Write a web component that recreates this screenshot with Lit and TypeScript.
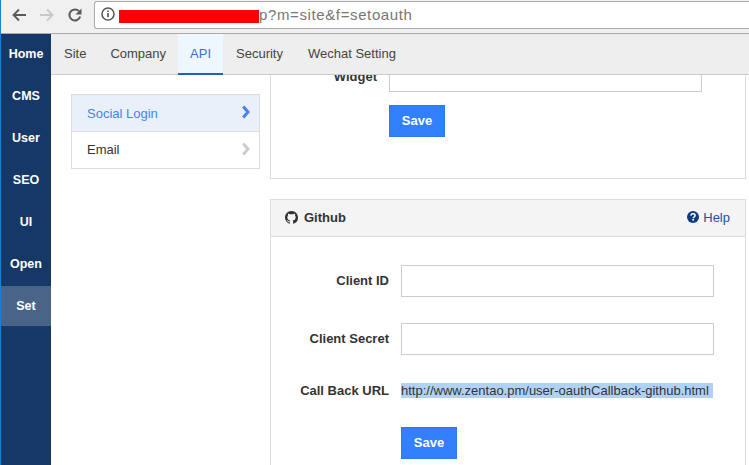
import { LitElement, html, css } from "lit";
import { customElement } from "lit/decorators.js";

const side = ["Home", "CMS", "User", "SEO", "UI", "Open", "Set"];
const tabs = ["Site", "Company", "API", "Security", "Wechat Setting"];

@customElement("app-root")
export class AppRoot extends LitElement {
  static styles = css`
    :host {
      display: flex;
      flex-direction: column;
      height: 465px;
      width: 749px;
      overflow: hidden;
      box-sizing: border-box;
      border-left: 1px solid #1a7fd8;
      font-family: "Liberation Sans", Arial, sans-serif;
      font-size: 13px;
      color: #333;
      background: #fff;
    }
    .chrome {
      flex: none;
      background: #f0f0f0;
      border-bottom: 1px solid #aaa;
      display: flex;
      padding: 1px 0 4px 0;
      box-sizing: content-box;
      height: 28px;
    }
    .navbtn {
      width: 28px;
      display: flex;
      align-items: center;
      justify-content: center;
      flex: none;
      margin-top: 2px;
      align-self: flex-start;
      height: 24px;
    }
    .navs { display: flex; padding-left: 4px; width: 93px; flex: none; box-sizing: border-box; }
    .addr {
      flex: 1;
      background: #fff;
      border: 1px solid #aaa;
      border-right: none;
      border-radius: 3px 0 0 3px;
      display: flex;
      align-items: center;
      padding-left: 6px;
      box-sizing: border-box;
      height: 28px;
      font-size: 15px;
      color: #777;
      letter-spacing: 0.62px;
    }
    .addr svg { flex: none; margin: 0 4px 2px 0; }
    .red { width: 140px; height: 13px; background: #fe0000; flex: none; margin-top: 2px; }
    .rest-url { padding-bottom: 2px; }
    .rest { flex: 1; display: flex; min-height: 0; }
    .side {
      width: 50px;
      flex: none;
      background: #163868;
      display: flex;
      flex-direction: column;
      gap: 2px;
    }
    .side div {
      height: 40px;
      display: flex;
      align-items: center;
      justify-content: center;
      color: #fff;
      font-weight: bold;
      font-size: 12.5px;
      padding: 0 0 1px 0;
      box-sizing: border-box;
    }
    .side .on { background: #4a6488; }
    .right { flex: 1; display: flex; flex-direction: column; min-width: 0; }
    .tabs {
      height: 40px;
      flex: none;
      background: #eee;
      border-bottom: 1px solid #ccc;
      display: flex;
      padding-left: 1px;
    }
    .tab {
      padding: 0 12px 2px;
      display: flex;
      align-items: center;
      color: #444;
      box-sizing: border-box;
    }
    .tab:nth-child(n + 4) { margin-left: 1px; }
    .tab.on {
      color: #3b6fd8;
      background: #eef6fe;
      border-bottom: 2px solid #1f5fc8;
      height: 41px;
      padding-bottom: 0;
    }
    .content { flex: 1; display: flex; gap: 10px; padding-left: 20px; min-height: 0; overflow: hidden; }
    .menu {
      width: 189px;
      flex: none;
      margin-top: 19px;
      align-self: flex-start;
      border: 1px solid #ddd;
      box-sizing: border-box;
    }
    .mi {
      height: 36px;
      display: flex;
      align-items: center;
      justify-content: space-between;
      padding: 0 9px 0 15px;
      box-sizing: border-box;
    }
    .mi + .mi { border-top: 1px solid #ddd; height: 37px; padding-bottom: 2px; }
    .mi.on { background: #e9f0fa; color: #4a80f5; }
    .mi.on svg { margin-bottom: 3px; }
    .panels { width: 476px; flex: none; display: flex; flex-direction: column; gap: 20px; }
    .panel { border: 1px solid #ddd; background: #fff; }
    .top { border-top: none; padding-bottom: 41px; }
    .low { padding-bottom: 40px; }
    .form { display: grid; column-gap: 12px; align-items: center; justify-content: start; }
    .f1 { grid-template-columns: 106px 313px; row-gap: 13px; margin-top: -15px; }
    .f2 { grid-template-columns: 118px 313px; row-gap: 26px; padding-top: 28px; }
    label { text-align: right; font-weight: bold; color: #333; padding-bottom: 2px; }
    .f1 label { padding-bottom: 0; }
    .input {
      height: 32px;
      border: 1px solid #ccc;
      background: #fff;
      box-sizing: border-box;
    }
    .save {
      display: block;
      width: 56px;
      height: 32px;
      background: #3280fc;
      border: 1px solid #2a78f5;
      color: #fff;
      font: bold 13px "Liberation Sans", Arial, sans-serif;
      padding: 0 0 2px;
      box-sizing: border-box;
    }
    .f2 .save { margin-top: 3px; }
    label.cb { padding: 2px 0 0; }
    .url {
      display: block;
      width: 312px;
      height: 15px;
      line-height: 15px;
      margin-top: 2px;
      background: #b0d2f6;
      white-space: nowrap;
    }
    .head {
      height: 37px;
      box-sizing: border-box;
      background: #f4f4f4;
      border-bottom: 1px solid #ddd;
      display: flex;
      align-items: center;
      justify-content: space-between;
      padding: 0 15px 2px 14px;
    }
    .title { display: flex; align-items: center; gap: 6px; font-weight: bold; }
    .help { display: flex; align-items: center; gap: 4px; color: #1f4f9f; }
    svg { display: block; }
  `;

  render() {
    return html`
      <div class="chrome">
        <div class="navs">
          <div class="navbtn">
            <svg width="16" height="16" viewBox="0 0 16 16"><path d="M15 8H3M8 2.5 2.5 8 8 13.5" fill="none" stroke="#5a5a5a" stroke-width="1.8"/></svg>
          </div>
          <div class="navbtn">
            <svg width="16" height="16" viewBox="0 0 16 16"><path d="M1 8h12M8 2.5 13.5 8 8 13.5" fill="none" stroke="#c8c8c8" stroke-width="1.8"/></svg>
          </div>
          <div class="navbtn">
            <svg width="16" height="16" viewBox="0 0 16 16"><path d="M13.2 9.5A5.5 5.5 0 1 1 12 4.2" fill="none" stroke="#5a5a5a" stroke-width="2"/><path d="M14.5 1.5v6h-6z" fill="#5a5a5a"/></svg>
          </div>
        </div>
        <div class="addr">
          <svg width="14" height="14" viewBox="0 0 14 14"><circle cx="7" cy="7" r="6" fill="none" stroke="#5a5a5a" stroke-width="1.6"/><path d="M7 6v4.2M7 3.4v1.6" stroke="#5a5a5a" stroke-width="1.7"/></svg>
          <span class="red"></span><span class="rest-url">p?m=site&amp;f=setoauth</span>
        </div>
      </div>
      <div class="rest">
        <div class="side">
          ${side.map((s) => html`<div class=${s === "Set" ? "on" : ""}>${s}</div>`)}
        </div>
        <div class="right">
          <div class="tabs">
            ${tabs.map((t) => html`<div class="tab ${t === "API" ? "on" : ""}">${t}</div>`)}
          </div>
          <div class="content">
            <div class="menu">
              <div class="mi on">Social Login
                <svg width="10" height="14" viewBox="0 0 10 14"><path d="M3.2 1.5 8 7l-4.8 5.5" fill="none" stroke="#4a80f5" stroke-width="3"/></svg>
              </div>
              <div class="mi">Email
                <svg width="10" height="14" viewBox="0 0 10 14"><path d="M3.2 1.5 8 7l-4.8 5.5" fill="none" stroke="#ccc" stroke-width="3"/></svg>
              </div>
            </div>
            <div class="panels">
              <div class="panel top">
                <div class="form f1">
                  <label>Widget</label><div class="input"></div>
                  <span></span><div><button class="save">Save</button></div>
                </div>
              </div>
              <div class="panel low">
                <div class="head">
                  <div class="title">
                    <svg width="13" height="13" viewBox="0 0 16 16"><path fill="#333" d="M8 0C3.58 0 0 3.58 0 8c0 3.54 2.29 6.53 5.47 7.59.4.07.55-.17.55-.38 0-.19-.01-.82-.01-1.49-2.01.37-2.53-.49-2.69-.94-.09-.23-.48-.94-.82-1.13-.28-.15-.68-.52-.01-.53.63-.01 1.08.58 1.23.82.72 1.21 1.87.87 2.33.66.07-.52.28-.87.51-1.07-1.78-.2-3.64-.89-3.64-3.95 0-.87.31-1.59.82-2.15-.08-.2-.36-1.02.08-2.12 0 0 .67-.21 2.2.82.64-.18 1.32-.27 2-.27s1.36.09 2 .27c1.53-1.04 2.2-.82 2.2-.82.44 1.1.16 1.92.08 2.12.51.56.82 1.27.82 2.15 0 3.07-1.87 3.75-3.65 3.95.29.25.54.73.54 1.48 0 1.07-.01 1.93-.01 2.2 0 .21.15.46.55.38A8.01 8.01 0 0 0 16 8c0-4.42-3.58-8-8-8z"/></svg>
                    <span>Github</span>
                  </div>
                  <div class="help">
                    <svg width="12" height="12" viewBox="0 0 12 12"><circle cx="6" cy="6" r="6" fill="#0f3a80"/><path d="M3.9 4.6C4 3.3 5 2.8 6 2.8c1.2 0 2.1.7 2.1 1.7 0 1.5-1.9 1.5-1.9 2.7" fill="none" stroke="#fff" stroke-width="1.5"/><rect x="5.3" y="8" width="1.7" height="1.6" fill="#fff"/></svg>
                    <span>Help</span>
                  </div>
                </div>
                <div class="form f2">
                  <label>Client ID</label><div class="input"></div>
                  <label>Client Secret</label><div class="input"></div>
                  <label class="cb">Call Back URL</label><span class="url">http://www.zentao.pm/user-oauthCallback-github.html</span>
                  <span></span><div><button class="save">Save</button></div>
                </div>
              </div>
            </div>
          </div>
        </div>
      </div>
    `;
  }
}
